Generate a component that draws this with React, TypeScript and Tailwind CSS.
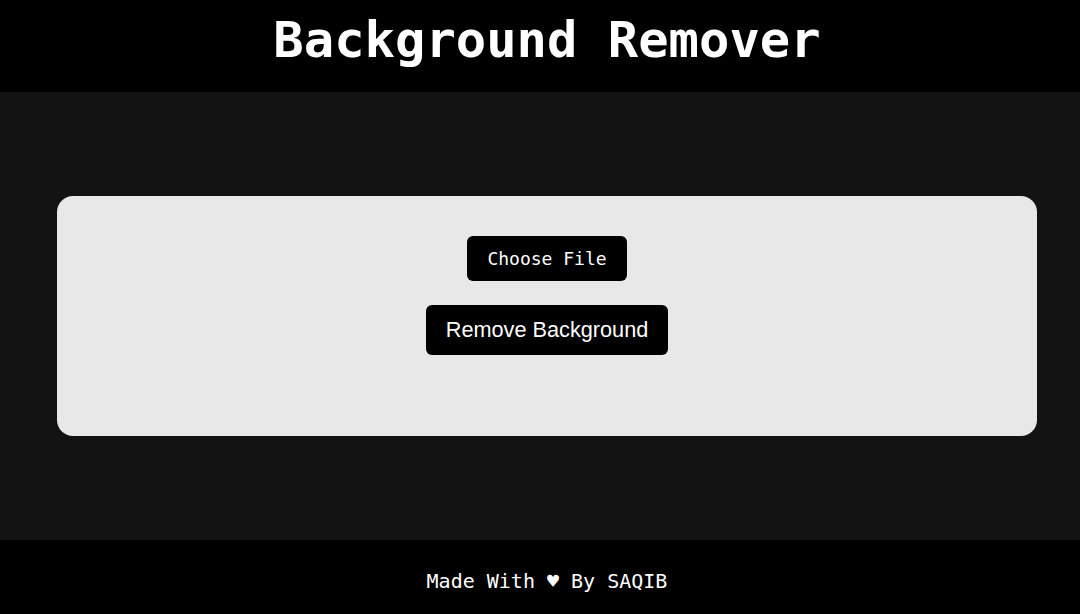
export default function App() {
  return (
    <div className="flex h-[614px] w-[1094px] flex-col bg-[#131313]" style={{ fontFamily: '"DejaVu Sans Mono", monospace' }}>
      <header className="flex h-[92px] shrink-0 justify-center bg-black pt-[15px]">
        <h1 className="h-[50px] text-[50.5px] font-bold leading-[50px] text-white">Background Remover</h1>
      </header>

      <main className="flex flex-1 items-center justify-center px-[57px]">
        <div className="flex h-[240px] w-full flex-col items-center rounded-2xl bg-[#e8e8e8] pt-10">
          <button className="h-[45px] w-[160px] rounded-md bg-black text-[18px] text-white">
            Choose File
          </button>
          <button
            className="mt-6 h-[50px] w-[242px] rounded-md bg-black text-[21.7px] text-white"
            style={{ fontFamily: '"Liberation Sans", Arial, sans-serif' }}
          >
            Remove Background
          </button>
        </div>
      </main>

      <footer className="flex h-[74px] shrink-0 items-center justify-center bg-black pt-2">
        <p className="text-[20px] text-white">Made With ♥ By SAQIB</p>
      </footer>
    </div>
  );
}
